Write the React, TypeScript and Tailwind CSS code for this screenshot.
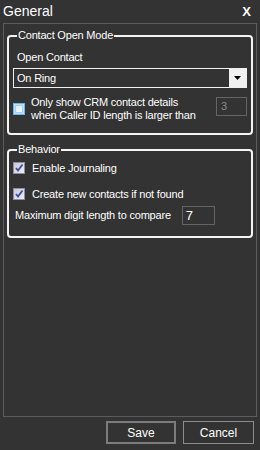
import React from "react";

const font = { fontFamily: '"Liberation Sans", Arial, sans-serif' };

function CheckedBox() {
  return (
    <span className="flex h-[12px] w-[12px] shrink-0 items-center justify-center border border-[#8f8f9f] bg-[linear-gradient(135deg,#c9c9d6,#eeeef4)]">
      <svg width="10" height="10" viewBox="0 0 10 10">
        <path d="M2 5 L4 7.5 L8.5 1.5" fill="none" stroke="#3a4fa0" strokeWidth="1.8" />
      </svg>
    </span>
  );
}

function UncheckedBox() {
  return (
    <span className="flex h-[12px] w-[12px] shrink-0 items-center justify-center border border-[#6fb6ee] bg-[#bfe0fa]">
      <span className="h-[8px] w-[8px] border border-[#9cd0f6] bg-[linear-gradient(135deg,#d6ecfc,#f4faff)]" />
    </span>
  );
}

export default function App() {
  return (
    <div
      className="flex h-[450px] w-[260px] flex-col bg-[#333333] text-[11px] tracking-[-0.2px] text-white"
      style={font}
    >
      <div className="flex h-[23px] items-center justify-between pl-[3px] pr-[9px]">
        <span className="text-[14px] tracking-normal">General</span>
        <span className="text-[13px] font-bold tracking-normal">X</span>
      </div>
      <div className="mx-[3px] flex h-[394px] flex-col border border-[#5c5c5c] px-[3px] pt-[5px]">
        <fieldset className="h-[106px] rounded-[4px] border-2 border-[#f4f4f4] px-[4px]">
          <legend className="ml-[4px] px-[1px] leading-[13px]">Contact Open Mode</legend>
          <div className="mt-[9px] pl-[4px] leading-[13px]">Open Contact</div>
          <div className="mt-[4px] flex h-[20px] items-stretch border border-[#f0f0f0] bg-[#333333]">
            <span className="flex flex-1 items-center pl-[3px]">On Ring</span>
            <span className="flex w-[17px] items-center justify-center bg-[#f0f0f0]">
              <svg width="7" height="4" viewBox="0 0 7 4">
                <path d="M0 0 H7 L3.5 4 Z" fill="#000" />
              </svg>
            </span>
          </div>
          <div className="mt-[3px] flex items-center">
            <div className="mt-[5px] flex items-center gap-[6px]">
              <UncheckedBox />
              <span className="leading-[13px]">
                Only show CRM contact details
                <br />
                when Caller ID length is larger than
              </span>
            </div>
            <div className="ml-auto flex h-[19px] w-[31px] items-center border border-[#646464] pl-[4px] text-[#8a8a8a]">
              3
            </div>
          </div>
        </fieldset>
        <fieldset className="mt-[8px] h-[95px] rounded-[4px] border-2 border-[#f4f4f4] px-[4px]">
          <legend className="ml-[4px] px-[1px] leading-[13px]">Behavior</legend>
          <div className="mt-[4px] flex items-center gap-[7px]">
            <CheckedBox />
            <span>Enable Journaling</span>
          </div>
          <div className="mt-[9px] flex items-center gap-[7px]">
            <CheckedBox />
            <span>Create new contacts if not found</span>
          </div>
          <div className="mt-[4px] flex items-center pl-[2px]">
            <span>Maximum digit length to compare</span>
            <div className="ml-[11px] flex h-[19px] w-[33px] items-center border border-[#646464] pl-[3px] text-[13px]">
              7
            </div>
          </div>
        </fieldset>
      </div>
      <div className="mt-[4px] flex justify-end gap-[7px] pr-[6px] text-[12px] tracking-normal">
        <button className="h-[23px] w-[70px] border-2 border-[#7c7c7c] bg-[#333333] text-white">Save</button>
        <button className="h-[23px] w-[71px] border border-[#8c8c8c] bg-[#333333] text-white">Cancel</button>
      </div>
    </div>
  );
}
